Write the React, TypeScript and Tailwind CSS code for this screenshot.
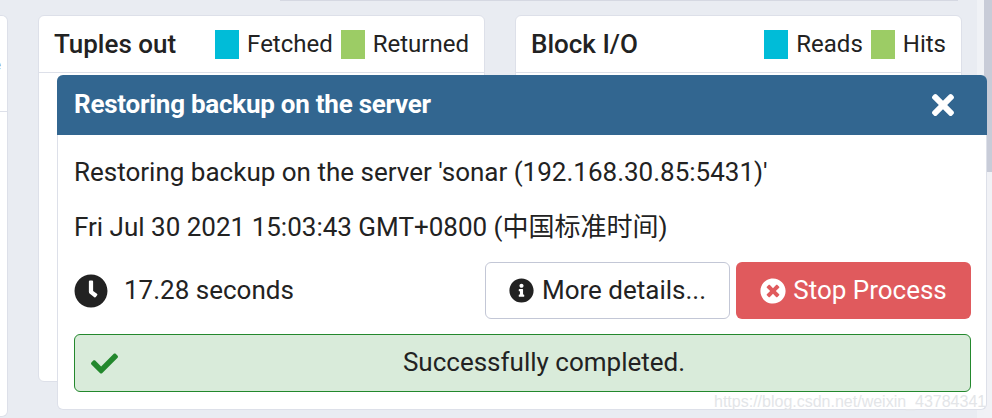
import { FaCheck, FaClock, FaInfoCircle, FaTimes, FaTimesCircle } from "react-icons/fa";

function Legend({ color, label }: { color: string; label: string }) {
  return (
    <div className="flex items-center">
      <span className={`w-6 h-[29px] ${color}`} />
      <span className="ml-2 text-[24px]/[29px] text-[#222]">{label}</span>
    </div>
  );
}

function ChartCard({ title, children }: { title: string; children: React.ReactNode }) {
  return (
    <div className="w-[447px] h-[367px] shrink-0 bg-white rounded-[6px] border border-[#dde0e9]">
      <div className="h-[57px] flex items-center justify-between pl-[15px] pr-[15px] border-b border-[#dde0e9]">
        <h3 className="text-[26px] font-medium text-[#222]">{title}</h3>
        <div className="flex items-center gap-2">{children}</div>
      </div>
    </div>
  );
}

export default function App() {
  return (
    <div
      className="relative w-[992px] h-[418px] overflow-hidden flex bg-[#e9ecf2]"
      style={{ fontFamily: "Roboto, 'Noto Sans CJK SC', sans-serif" }}
    >
      <div className="flex-1">
        <div className="h-px ml-[280px] mr-[19px] bg-[#d5d8e2]" />
        <div className="flex items-start gap-[30px] pt-[14px]">
          <div className="w-2 h-[402px] shrink-0 bg-white rounded-r-[6px] border-r border-b border-t border-[#dde0e9] overflow-hidden">
            <div className="h-[96px] flex items-center justify-end pr-[6px] pt-[4px] border-b border-[#dde0e9] text-[14px] text-[#777]">
              e
            </div>
          </div>
          <ChartCard title="Tuples out">
            <Legend color="bg-[#00bcd8]" label="Fetched" />
            <Legend color="bg-[#9ccc65]" label="Returned" />
          </ChartCard>
          <ChartCard title="Block I/O">
            <Legend color="bg-[#00bcd8]" label="Reads" />
            <Legend color="bg-[#9ccc65]" label="Hits" />
          </ChartCard>
        </div>
      </div>

      <div className="w-[7px] shrink-0 bg-[#f0f2f6]" />
      <div className="w-2 shrink-0 bg-[#f1f2f6]">
        <div className="h-[172px] bg-[#c8ccd8]" />
      </div>

      <div className="absolute left-[57px] top-[75px] w-[930px] h-[335px] flex flex-col bg-white rounded-[6px] border border-[#dde0e9] border-t-0 text-[#222]">
        <div className="h-[60px] -mx-px flex items-center justify-between pl-[17px] pr-[28px] pb-px bg-[#326690] rounded-t-[6px] text-white">
          <h4 className="text-[26px] font-bold tracking-[-0.25px]">Restoring backup on the server</h4>
          <FaTimes className="w-[32px] h-[32px]" />
        </div>
        <div className="flex-1 flex flex-col pl-[16px] pr-[15px] pt-[20px]">
          <p className="text-[26px]/[35px]">Restoring backup on the server 'sonar (192.168.30.85:5431)'</p>
          <p className="mt-[20px] text-[26px]/[35px]">Fri Jul 30 2021 15:03:43 GMT+0800 (中国标准时间)</p>
          <div className="mt-[17px] flex items-center justify-between">
            <div className="flex items-center gap-4">
              <FaClock className="w-[34px] h-[34px]" />
              <span className="text-[26px]">17.28 seconds</span>
            </div>
            <div className="flex items-center gap-[6px]">
              <button className="w-[245px] h-[57px] flex items-center justify-center gap-[8px] bg-white border border-[#c3c7d6] rounded-[6px] text-[26px]">
                <FaInfoCircle className="w-[25px] h-[25px]" />
                More details...
              </button>
              <button className="w-[235px] h-[57px] flex items-center justify-center gap-[7px] bg-[#e05a5d] rounded-[6px] text-[26px] text-white">
                <FaTimesCircle className="w-[26px] h-[26px]" />
                Stop Process
              </button>
            </div>
          </div>
          <div className="mt-[15px] h-[58px] flex items-center bg-[#d9ebda] border border-[#23882d] rounded-[6px] text-[26px]">
            <FaCheck className="ml-[16px] shrink-0 w-[27px] h-[27px] text-[#23882d]" />
            <span className="flex-1 text-center pb-px">Successfully completed.</span>
          </div>
        </div>
      </div>

      <span
        className="absolute left-[714px] top-[390px] text-[16px] text-[#e3e5e8]"
        style={{ fontFamily: "'Liberation Sans', sans-serif" }}
      >
        https://blog.csdn.net/weixin_43784341
      </span>
    </div>
  );
}
